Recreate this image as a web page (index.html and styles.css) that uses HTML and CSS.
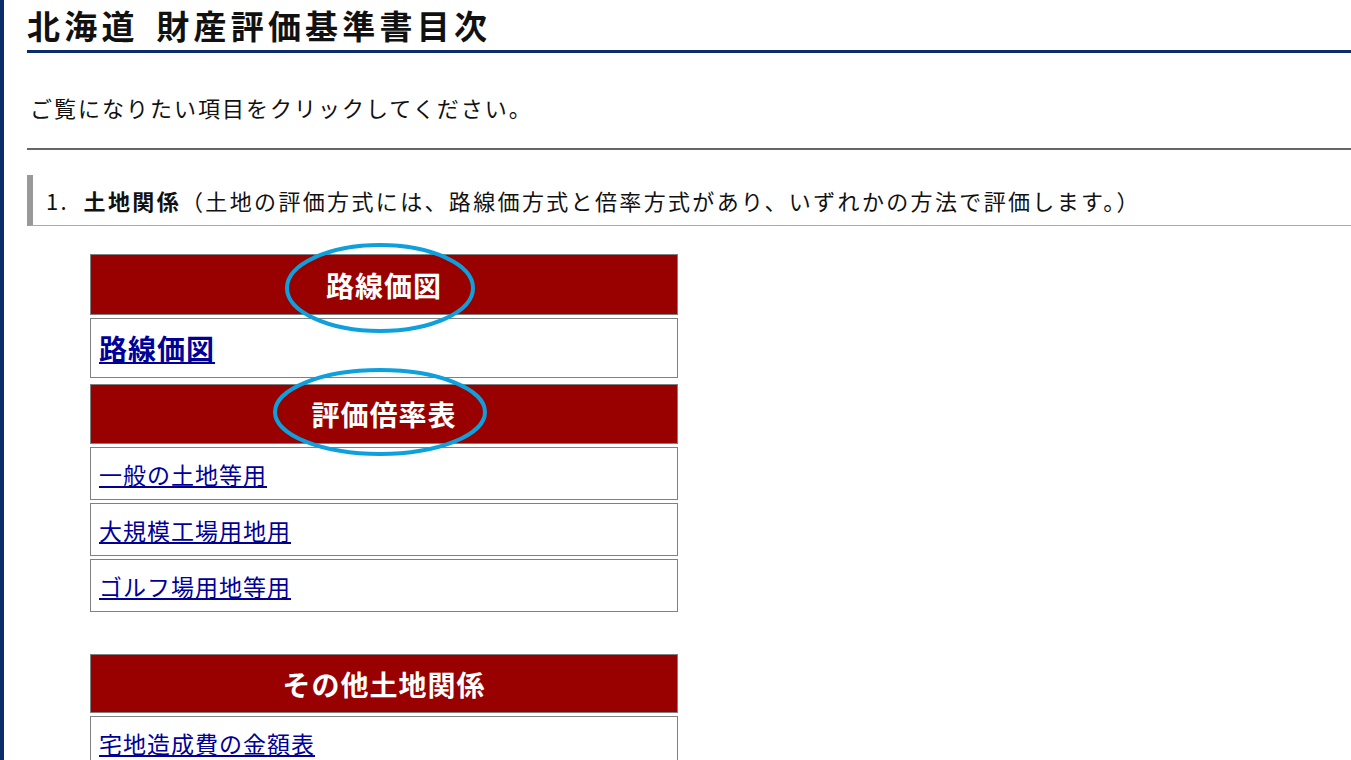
FILE: index.html
```html
<!DOCTYPE html>
<html lang="ja">
<head>
  <meta charset="UTF-8" />
  <meta name="viewport" content="width=device-width, initial-scale=1.0"/>
  <title>北海道 財産評価基準書目次</title>
  <link rel="stylesheet" href="styles.css">
</head>
<body>
  <div class="page">
    <h1>北海道 財産評価基準書目次</h1>
    <p class="lead">ご覧になりたい項目をクリックしてください。</p>
    <hr class="rule" />

    <h2 class="section">1.&nbsp;&nbsp;<b>土地関係</b>（土地の評価方式には、路線価方式と倍率方式があり、いずれかの方法で評価します。）</h2>

    <div class="menu">
      <div class="menu-head first">
        路線価図
        <svg class="mark mark-1" width="196" height="96" viewBox="0 0 196 96">
          <ellipse cx="98" cy="48" rx="93" ry="43" />
        </svg>
      </div>
      <div class="menu-row big"><a href="#">路線価図</a></div>

      <div class="menu-head second">
        評価倍率表
        <svg class="mark mark-2" width="222" height="94" viewBox="0 0 222 94">
          <ellipse cx="111" cy="47" rx="105" ry="42" />
        </svg>
      </div>
      <div class="menu-row"><a href="#">一般の土地等用</a></div>
      <div class="menu-row"><a href="#">大規模工場用地用</a></div>
      <div class="menu-row"><a href="#">ゴルフ場用地等用</a></div>
    </div>

    <div class="menu other">
      <div class="menu-head">その他土地関係</div>
      <div class="menu-row"><a href="#">宅地造成費の金額表</a></div>
    </div>
  </div>
</body>
</html>
```

FILE: styles.css
```css
html, body {
  margin: 0;
  padding: 0;
}

body {
  font-family: "Noto Sans CJK JP", "Noto Sans", sans-serif;
  color: #111;
  background: #fff;
  border-left: 4px solid #0b2d6b;
  min-height: 100vh;
}

.page {
  padding-left: 23px;
}

h1 {
  margin: 0;
  font-size: 33px;
  line-height: 50px;
  letter-spacing: 4.2px;
  word-spacing: 6px;
  font-weight: bold;
  border-bottom: 3px solid #0b2d6b;
}

.lead {
  margin: 38px 0 0 3px;
  font-size: 22px;
  line-height: 32px;
  letter-spacing: 2px;
}

.rule {
  margin: 25px 0 0;
  border: 0;
  border-top: 2px solid #666;
  height: 0;
}

.section {
  margin: 25px 0 0;
  padding-left: 13px;
  border-left: 6px solid #999;
  border-bottom: 1px solid #aaa;
  font-size: 22px;
  font-weight: normal;
  line-height: 50px;
  letter-spacing: 2.35px;
}

.section b {
  font-weight: bold;
}

.menu {
  width: 588px;
  margin: 28px 0 0 63px;
  display: flex;
  flex-direction: column;
  gap: 3px;
}

.menu.other {
  margin-top: 42px;
}

.menu-head {
  position: relative;
  height: 57px;
  border: 1px solid #808080;
  background: #990000;
  color: #fff;
  font-size: 28px;
  font-weight: bold;
  letter-spacing: 1px;
  display: flex;
  align-items: center;
  justify-content: center;
}

.menu-head.first {
  height: 59px;
}

.menu-head.second {
  height: 58px;
  margin-top: 3px;
}

.menu-row {
  height: 51px;
  border: 1px solid #808080;
  padding-left: 8px;
  display: flex;
  align-items: center;
}

.menu-row.big {
  height: 58px;
}

.menu-row a {
  color: #000099;
  font-size: 23px;
  letter-spacing: 1px;
}

.menu-row.big a {
  font-size: 28px;
  font-weight: bold;
  letter-spacing: 1px;
}

.mark {
  position: absolute;
  pointer-events: none;
}

.mark ellipse {
  fill: none;
  stroke: #0ea0dc;
  stroke-width: 4;
}

.mark-1 {
  left: 191px;
  top: -15px;
}

.mark-2 {
  left: 178px;
  top: -20px;
}
```
